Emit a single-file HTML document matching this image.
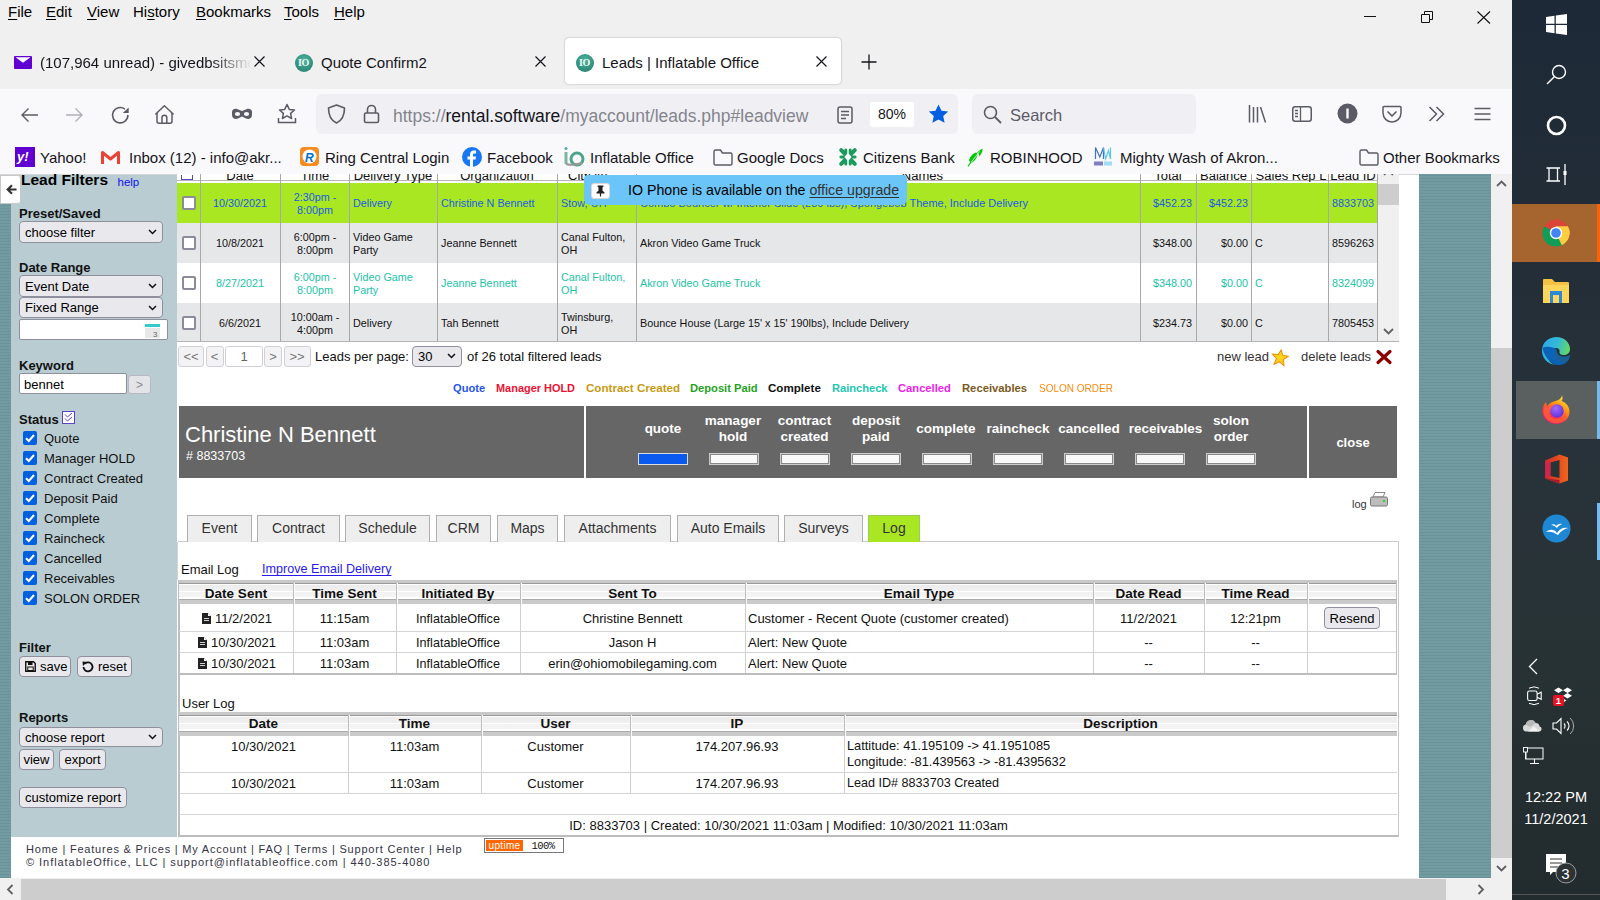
<!DOCTYPE html>
<html><head><meta charset="utf-8">
<style>
*{box-sizing:border-box;margin:0;padding:0}
html,body{width:1600px;height:900px;overflow:hidden;background:#fff;font-family:"Liberation Sans",sans-serif;}
.a{position:absolute;white-space:nowrap}
#chrome{position:absolute;left:0;top:0;width:1512px;height:174px;background:#f0f0f0}
#nav{position:absolute;left:0;top:89px;width:1512px;height:85px;background:#f9f9fb}
.menu{font-size:15px;color:#000;top:3px}
.menu u{text-decoration:underline;text-underline-offset:2px}
.tabt{font-size:15px;color:#15141a;top:54px}
.bm{font-size:15px;color:#15141a;margin-top:1px}
svg{position:absolute;overflow:visible}
#task{position:absolute;left:1512px;top:0;width:88px;height:900px;background:linear-gradient(#1d2937 0%,#222d37 25%,#28323a 50%,#283336 70%,#222b2d 100%)}
#page{position:absolute;left:0;top:174px;width:1491px;height:704px;background:#fff;overflow:hidden}
#vscroll{position:absolute;left:1491px;top:174px;width:21px;height:704px;background:#f0f0f0}
#hscroll{position:absolute;left:0;top:878px;width:1512px;height:22px;background:#f0f0f0}
</style></head><body>
<div id="chrome">
  <div class="a menu" style="left:8px"><u>F</u>ile</div>
  <div class="a menu" style="left:46px"><u>E</u>dit</div>
  <div class="a menu" style="left:87px"><u>V</u>iew</div>
  <div class="a menu" style="left:133px">Hi<u>s</u>tory</div>
  <div class="a menu" style="left:196px"><u>B</u>ookmarks</div>
  <div class="a menu" style="left:284px"><u>T</u>ools</div>
  <div class="a menu" style="left:334px"><u>H</u>elp</div>

  <!-- window controls -->
  <div class="a" style="left:1364px;top:16px;width:12px;height:1px;background:#111"></div>
  <svg style="left:1420px;top:10px" width="14" height="14" viewBox="0 0 14 14"><path d="M1.5 4.5h8v8h-8z M4.5 4.5V1.5h8v8h-3" fill="none" stroke="#111" stroke-width="1"/></svg>
  <svg style="left:1477px;top:10.5px" width="14" height="13" viewBox="0 0 14 13"><path d="M0.5 0.5L13 12.5M13 0.5L0.5 12.5" stroke="#111" stroke-width="1.1"/></svg>
  <!-- tabs -->
  <svg style="left:14px;top:55.5px" width="18" height="13" viewBox="0 0 18 13"><rect x="0" y="0" width="18" height="13" rx="1" fill="#6001d2"/><path d="M1.5 1.2L9 6.8L16.5 1.2Z" fill="#fff"/></svg>
  <div class="a tabt" style="left:40px;width:212px;overflow:hidden;-webkit-mask-image:linear-gradient(90deg,#000 80%,transparent)">(107,964 unread) - givedbsitsmc</div>
  <svg style="left:254px;top:56px" width="11" height="11" viewBox="0 0 11 11"><path d="M0.5 0.5L10.5 10.5M10.5 0.5L0.5 10.5" stroke="#15141a" stroke-width="1.2"/></svg>
  <div class="a" style="left:295px;top:54px;width:18px;height:18px;border-radius:50%;background:radial-gradient(circle at 50% 35%,#4fb3a0,#1f7a66)"></div>
  <div class="a" style="left:298px;top:57px;font:bold 10px 'Liberation Serif',serif;color:#eef8f4;letter-spacing:-0.3px">IO</div>
  <div class="a tabt" style="left:321px">Quote Confirm2</div>
  <svg style="left:535px;top:56px" width="11" height="11" viewBox="0 0 11 11"><path d="M0.5 0.5L10.5 10.5M10.5 0.5L0.5 10.5" stroke="#15141a" stroke-width="1.2"/></svg>
  <div class="a" style="left:565px;top:38px;width:276px;height:46px;background:#fff;border-radius:4px;box-shadow:0 0 2px rgba(0,0,0,.35)"></div>
  <div class="a" style="left:576px;top:54px;width:18px;height:18px;border-radius:50%;background:radial-gradient(circle at 50% 35%,#4fb3a0,#1f7a66)"></div>
  <div class="a" style="left:579px;top:57px;font:bold 10px 'Liberation Serif',serif;color:#eef8f4;letter-spacing:-0.3px">IO</div>
  <div class="a tabt" style="left:602px">Leads | Inflatable Office</div>
  <svg style="left:816px;top:56px" width="11" height="11" viewBox="0 0 11 11"><path d="M0.5 0.5L10.5 10.5M10.5 0.5L0.5 10.5" stroke="#15141a" stroke-width="1.2"/></svg>
  <svg style="left:861px;top:54px" width="16" height="16" viewBox="0 0 16 16"><path d="M8 0.5V15.5M0.5 8H15.5" stroke="#15141a" stroke-width="1.3"/></svg>
</div>
<div id="nav">
  <!-- nav icons (top relative 89) -->
  <svg style="left:20px;top:18px" width="19" height="16" viewBox="0 0 19 16"><path d="M18 8H2M8.5 1.5L2 8L8.5 14.5" fill="none" stroke="#5b5b66" stroke-width="1.4"/></svg>
  <svg style="left:65px;top:18px" width="19" height="16" viewBox="0 0 19 16"><path d="M1 8H17M10.5 1.5L17 8L10.5 14.5" fill="none" stroke="#b0b0b6" stroke-width="1.4"/></svg>
  <svg style="left:110px;top:16px" width="20" height="20" viewBox="0 0 20 20"><path d="M17.9 10A7.7 7.7 0 1 1 14.95 4.1" fill="none" stroke="#5b5b66" stroke-width="1.6"/><path d="M12.8 7.9L18.7 2.4V7.9Z" fill="#5b5b66"/></svg>
  <svg style="left:155px;top:16px" width="20" height="20" viewBox="0 0 20 20"><path d="M0.8 9L9.4 0.8L18.2 9" fill="none" stroke="#5b5b66" stroke-width="1.5" stroke-linejoin="round" stroke-linecap="round"/><path d="M2 8V16.2A2 2 0 0 0 4 18.2H15A2 2 0 0 0 17 16.2V8" fill="none" stroke="#5b5b66" stroke-width="1.5"/><path d="M7 18.2V12.6A2.4 2.4 0 0 1 11.8 12.6V18.2" fill="none" stroke="#5b5b66" stroke-width="1.5"/></svg>
  <svg style="left:231px;top:19px" width="22" height="12" viewBox="0 0 22 12"><path d="M1 4C1 1 4 0.5 6 1L11 3L16 1C18 0.5 21 1 21 4V7C21 11 17 11.5 15 10.5L11 8.5L7 10.5C5 11.5 1 11 1 7Z" fill="#5b5b66"/><ellipse cx="6.5" cy="6" rx="2.6" ry="2" fill="#f9f9fb"/><ellipse cx="15.5" cy="6" rx="2.6" ry="2" fill="#f9f9fb"/></svg>
  <svg style="left:277px;top:14px" width="20" height="21" viewBox="0 0 20 21"><path d="M10 1.5L12.3 6.4L17.5 7L13.6 10.4L14.6 15.5L10 12.9L5.4 15.5L6.4 10.4L2.5 7L7.7 6.4Z" fill="none" stroke="#5b5b66" stroke-width="1.5" stroke-linejoin="round"/><path d="M1.5 15V19.5H18.5V15" fill="none" stroke="#5b5b66" stroke-width="1.5"/></svg>
  <div class="a" style="left:316px;top:5px;width:642px;height:40px;background:#f0f0f4;border-radius:6px"></div>
  <svg style="left:327px;top:104px;top:15px" width="19" height="20" viewBox="0 0 19 20"><path d="M9.5 1L17.5 4C17.5 12 14 17 9.5 19C5 17 1.5 12 1.5 4Z" fill="none" stroke="#5b5b66" stroke-width="1.6" stroke-linejoin="round"/></svg>
  <svg style="left:363px;top:15px" width="17" height="20" viewBox="0 0 17 20"><rect x="1.5" y="9" width="14" height="9.5" rx="1.5" fill="none" stroke="#5b5b66" stroke-width="1.6"/><path d="M4.5 9V5.5A4 4 0 0 1 12.5 5.5V9" fill="none" stroke="#5b5b66" stroke-width="1.6"/></svg>
  <div class="a" style="left:393px;top:17px;font-size:17.5px;color:#84848c;letter-spacing:0px"><span>https://</span><span style="color:#15141a">rental.software</span><span>/myaccount/leads.php#leadview</span></div>
  <svg style="left:837px;top:17px" width="16" height="18" viewBox="0 0 16 18"><rect x="1" y="1" width="14" height="16" rx="2" fill="none" stroke="#5b5b66" stroke-width="1.5"/><path d="M4 5.5H12M4 9H12M4 12.5H9" stroke="#5b5b66" stroke-width="1.4"/></svg>
  <div class="a" style="left:870px;top:13px;width:44px;height:25px;background:#fff;border-radius:3px;font-size:14px;color:#15141a;text-align:center;line-height:25px">80%</div>
  <svg style="left:928px;top:15px" width="21" height="20" viewBox="0 0 21 20"><path d="M10.5 0.5L13.5 6.8L20.2 7.5L15.2 12L16.6 18.8L10.5 15.4L4.4 18.8L5.8 12L0.8 7.5L7.5 6.8Z" fill="#0061e0"/></svg>
  <div class="a" style="left:972px;top:5px;width:224px;height:40px;background:#f0f0f4;border-radius:6px"></div>
  <svg style="left:983px;top:16px" width="19" height="19" viewBox="0 0 19 19"><circle cx="7.5" cy="7.5" r="6" fill="none" stroke="#5b5b66" stroke-width="1.6"/><path d="M12 12L18 18" stroke="#5b5b66" stroke-width="1.8"/></svg>
  <div class="a" style="left:1010px;top:17px;font-size:16.5px;color:#5b5b66">Search</div>
  <svg style="left:1248px;top:15px" width="20" height="19" viewBox="0 0 20 19"><path d="M1.5 1V18.5M5.5 3V18.5M9.5 3V18.5M12.5 3L17.5 18.5" stroke="#5b5b66" stroke-width="1.5" fill="none"/></svg>
  <svg style="left:1292px;top:17px" width="20" height="16" viewBox="0 0 20 16"><rect x="0.75" y="0.75" width="18.5" height="14.5" rx="2.5" fill="none" stroke="#5b5b66" stroke-width="1.5"/><path d="M8.5 1V15M3 4.5H6M3 7.5H6M3 10.5H6" stroke="#5b5b66" stroke-width="1.3"/></svg>
  <svg style="left:1337px;top:14px" width="21" height="21" viewBox="0 0 21 21"><circle cx="10.5" cy="10.5" r="10" fill="#5b5b66"/><rect x="9.3" y="5.5" width="2.4" height="10" fill="#f9f9fb"/></svg>
  <svg style="left:1382px;top:16px" width="20" height="19" viewBox="0 0 20 19"><path d="M2 1.5H18A1 1 0 0 1 19 2.5V8A9 9 0 0 1 1 8V2.5A1 1 0 0 1 2 1.5Z" fill="none" stroke="#5b5b66" stroke-width="1.5"/><path d="M6 7L10 11L14 7" fill="none" stroke="#5b5b66" stroke-width="1.7" stroke-linecap="round" stroke-linejoin="round"/></svg>
  <svg style="left:1428px;top:16px" width="18" height="18" viewBox="0 0 18 18"><path d="M1.5 2L8.5 9L1.5 16M8.5 2L15.5 9L8.5 16" fill="none" stroke="#5b5b66" stroke-width="1.5"/></svg>
  <svg style="left:1474px;top:17.5px" width="17" height="14" viewBox="0 0 17 14"><path d="M0.5 1.5H16.5M0.5 7H16.5M0.5 12.5H16.5" stroke="#5b5b66" stroke-width="1.5"/></svg>
  <!-- bookmarks -->
  <div class="a" style="left:15px;top:58px;width:20px;height:20px;background:#6001d2"></div>
  <div class="a" style="left:17px;top:60px;font:bold 13px 'Liberation Sans';color:#fff;font-style:italic">y!</div>
  <svg style="left:101px;top:62px" width="19" height="14" viewBox="0 0 19 14"><path d="M1.5 13V1.5L9.5 8L17.5 1.5V13" fill="none" stroke="#ea4335" stroke-width="3" stroke-linejoin="round"/></svg>
  <svg style="left:300px;top:58px" width="19" height="19" viewBox="0 0 19 19"><rect x="0" y="0" width="19" height="19" rx="4" fill="#f68b1f"/><circle cx="9.5" cy="9.5" r="7" fill="#fff"/><text x="5" y="14.5" font-family="Liberation Sans" font-weight="bold" font-style="italic" font-size="12" fill="#0072c6">R</text></svg>
  <svg style="left:462px;top:58px" width="20" height="20" viewBox="0 0 20 20"><circle cx="10" cy="10" r="10" fill="#1877f2"/><path d="M11 20V12.5H13.5L14 9.5H11V7.8C11 7 11.3 6.4 12.5 6.4H14V3.8C13.5 3.7 12.7 3.6 11.8 3.6C9.6 3.6 8 4.9 8 7.4V9.5H5.5V12.5H8V20Z" fill="#fff"/></svg>
  <svg style="left:564px;top:58px" width="22" height="20" viewBox="0 0 22 20"><path d="M2 5V17" stroke="#7fb3a0" stroke-width="3"/><circle cx="2" cy="1.5" r="1.5" fill="#5aa"/><circle cx="13" cy="12" r="6" fill="none" stroke="#4aa58a" stroke-width="3"/><path d="M2 17Q8 19 18 16" stroke="#999" stroke-width="2" fill="none"/></svg>
  <svg style="left:713px;top:60px" width="20" height="17" viewBox="0 0 20 17"><path d="M1 2.5A1.5 1.5 0 0 1 2.5 1H7.5L9.5 4H17.5A1.5 1.5 0 0 1 19 5.5V14.5A1.5 1.5 0 0 1 17.5 16H2.5A1.5 1.5 0 0 1 1 14.5Z" fill="none" stroke="#5b5b66" stroke-width="1.4" stroke-linejoin="round"/></svg>
  <svg style="left:839px;top:59px" width="18" height="18" viewBox="0 0 18 18"><g stroke="#1a9a5c" stroke-width="4" stroke-linecap="round"><path d="M2.2 2.2L7 7M15.8 2.2L11 7M2.2 15.8L7 11M15.8 15.8L11 11"/><path d="M6.8 2V6M11.2 2V6M6.8 12V16M11.2 12V16" stroke-width="3"/><path d="M2 9H5M13 9H16" stroke-width="3.2"/></g><path d="M9 4.8L12.6 9L9 13.2L5.4 9Z" fill="#f9f9fb"/><path d="M9 0V18" stroke="#f9f9fb" stroke-width="0.6" opacity=".6"/></svg>
  <svg style="left:967px;top:58px" width="16" height="20" viewBox="0 0 16 20"><path d="M10 5.5C13 3 15 1.5 15.5 1.8C16 4 14 8 12 9.5C12.5 7.5 11.5 6.5 10 5.5Z" fill="#00c805"/><path d="M9.5 5.5C6 6 2.5 10 2 13.5L4 16C7 15 10 11 10.5 7.5Z" fill="#00c805"/><path d="M1 19.5L12.5 4.5" stroke="#f9f9fb" stroke-width="0.8"/><path d="M1 19.5L4 15" stroke="#00c805" stroke-width="1.2"/></svg>
  <svg style="left:1093px;top:57px" width="21" height="21" viewBox="0 0 21 21"><path d="M2.5 13V1.5L6.8 11L10.5 1.5V13" fill="none" stroke="#3f72c9" stroke-width="1.2"/><path d="M10.5 1.5L12.6 13L15.5 4.5L17.5 13V1.5" fill="none" stroke="#5ec8ea" stroke-width="1.2"/><rect x="1" y="15.5" width="9" height="4" fill="#6a6ac0" opacity=".85"/><rect x="11" y="15.5" width="8" height="4" fill="#8fd8ee" opacity=".85"/></svg>
  <svg style="left:1359px;top:60px" width="20" height="17" viewBox="0 0 20 17"><path d="M1 2.5A1.5 1.5 0 0 1 2.5 1H7.5L9.5 4H17.5A1.5 1.5 0 0 1 19 5.5V14.5A1.5 1.5 0 0 1 17.5 16H2.5A1.5 1.5 0 0 1 1 14.5Z" fill="none" stroke="#5b5b66" stroke-width="1.4" stroke-linejoin="round"/></svg>
  <div class="a bm" style="left:40px;top:59px">Yahoo!</div>
  <div class="a bm" style="left:129px;top:59px">Inbox (12) - info@akr...</div>
  <div class="a bm" style="left:325px;top:59px">Ring Central Login</div>
  <div class="a bm" style="left:487px;top:59px">Facebook</div>
  <div class="a bm" style="left:590px;top:59px">Inflatable Office</div>
  <div class="a bm" style="left:737px;top:59px">Google Docs</div>
  <div class="a bm" style="left:863px;top:59px">Citizens Bank</div>
  <div class="a bm" style="left:990px;top:59px">ROBINHOOD</div>
  <div class="a bm" style="left:1120px;top:59px">Mighty Wash of Akron...</div>
  <div class="a bm" style="left:1383px;top:59px">Other Bookmarks</div>
</div>
<div id="page"><div class="a" style="left:0px;top:0px;width:11px;height:704px;background:repeating-linear-gradient(180deg,#729aa1 0px,#729aa1 1px,#6a9299 1px,#6a9299 2px,#739ba2 2px,#739ba2 3px)"></div>
<div class="a" style="left:11px;top:0px;width:166px;height:663px;background:#b9ccd2"></div>
<div class="a" style="left:1419px;top:0px;width:72px;height:704px;background:repeating-linear-gradient(180deg,#729aa1 0px,#729aa1 1px,#6a9299 1px,#6a9299 2px,#739ba2 2px,#739ba2 3px)"></div>
<div class="a" style="left:0px;top:0px;width:1419px;height:1px;background:#d8d8d8"></div>
<div class="a" style="left:0px;top:1px;width:21px;height:29px;background:#fff;border:1px solid #c8c8c8;border-radius:0 3px 3px 0"></div>
<svg style="left:6px;top:10px" width="11" height="11" viewBox="0 0 11 11"><path d="M10.5 5.5H2M6 1.2L1.7 5.5L6 9.8" fill="none" stroke="#333" stroke-width="2.2"/></svg>
<div class="a" style="left:21px;top:-2.12px;font-size:15.5px;line-height:1;font-weight:bold;color:#000">Lead Filters</div>
<div class="a" style="left:117.5px;top:2.77px;font-size:11.5px;line-height:1;color:#1212e8">help</div>
<div class="a" style="left:19px;top:32.50px;font-size:13px;line-height:1;font-weight:bold;color:#111">Preset/Saved</div>
<div class="a" style="left:19px;top:47px;width:144px;height:22px;background:#e9e9ed;border:1px solid #8f8f9d;border-radius:4px"></div>
<div class="a" style="left:25px;top:51.60px;font-size:13px;line-height:1;color:#000">choose filter</div>
<svg style="left:148px;top:55.0px" width="9" height="6" viewBox="0 0 9 6"><path d="M1 1L4.5 4.5L8 1" fill="none" stroke="#111" stroke-width="1.5"/></svg>
<div class="a" style="left:19px;top:87.00px;font-size:13px;line-height:1;font-weight:bold;color:#111">Date Range</div>
<div class="a" style="left:19px;top:101px;width:144px;height:22px;background:#e9e9ed;border:1px solid #8f8f9d;border-radius:4px"></div>
<div class="a" style="left:25px;top:105.60px;font-size:13px;line-height:1;color:#000">Event Date</div>
<svg style="left:148px;top:109.0px" width="9" height="6" viewBox="0 0 9 6"><path d="M1 1L4.5 4.5L8 1" fill="none" stroke="#111" stroke-width="1.5"/></svg>
<div class="a" style="left:19px;top:123px;width:144px;height:21px;background:#e9e9ed;border:1px solid #8f8f9d;border-radius:4px"></div>
<div class="a" style="left:25px;top:127.10px;font-size:13px;line-height:1;color:#000">Fixed Range</div>
<svg style="left:148px;top:130.5px" width="9" height="6" viewBox="0 0 9 6"><path d="M1 1L4.5 4.5L8 1" fill="none" stroke="#111" stroke-width="1.5"/></svg>
<div class="a" style="left:19px;top:145px;width:149px;height:21px;background:#fff;border:1px solid #8f8f9d;border-radius:2px"></div>
<svg style="left:145px;top:150px" width="15" height="14" viewBox="0 0 15 14"><rect x="0" y="0" width="15" height="3" fill="#3cc"/><rect x="0" y="4" width="15" height="10" fill="#e8e8e8"/><text x="8" y="13" font-size="8" font-family="Liberation Sans" fill="#666">3</text></svg>
<div class="a" style="left:19px;top:185.00px;font-size:13px;line-height:1;font-weight:bold;color:#111">Keyword</div>
<div class="a" style="left:19px;top:199px;width:108px;height:21px;background:#fff;border:1px solid #8f8f9d;border-radius:2px"></div>
<div class="a" style="left:24px;top:203.50px;font-size:13px;line-height:1;color:#000">bennet</div>
<div class="a" style="left:128px;top:201px;width:23px;height:19px;background:#e3e4e8;border:1px solid #b8b8c4;border-radius:3px"></div>
<div class="a" style="left:-160.5px;width:600px;text-align:center;top:204.84px;font-size:12px;line-height:1;color:#888">&gt;</div>
<div class="a" style="left:19px;top:239.00px;font-size:13px;line-height:1;font-weight:bold;color:#111">Status</div>
<svg style="left:62px;top:237px" width="13" height="13" viewBox="0 0 13 13"><rect x="0.5" y="0.5" width="12" height="12" fill="#fff" stroke="#5544cc" stroke-width="1"/><path d="M3 3.5L5.5 6L10 2M3 7.5L5.5 10L10 6" fill="none" stroke="#5544cc" stroke-width="1"/></svg>
<svg style="left:23px;top:257px" width="14" height="14" viewBox="0 0 14 14"><rect x="0" y="0" width="14" height="14" rx="2" fill="#0060df"/><path d="M3 7.2L5.8 10L11 4" fill="none" stroke="#fff" stroke-width="2"/></svg>
<div class="a" style="left:44px;top:258.00px;font-size:13px;line-height:1;color:#111">Quote</div>
<svg style="left:23px;top:277px" width="14" height="14" viewBox="0 0 14 14"><rect x="0" y="0" width="14" height="14" rx="2" fill="#0060df"/><path d="M3 7.2L5.8 10L11 4" fill="none" stroke="#fff" stroke-width="2"/></svg>
<div class="a" style="left:44px;top:278.00px;font-size:13px;line-height:1;color:#111">Manager HOLD</div>
<svg style="left:23px;top:297px" width="14" height="14" viewBox="0 0 14 14"><rect x="0" y="0" width="14" height="14" rx="2" fill="#0060df"/><path d="M3 7.2L5.8 10L11 4" fill="none" stroke="#fff" stroke-width="2"/></svg>
<div class="a" style="left:44px;top:298.00px;font-size:13px;line-height:1;color:#111">Contract Created</div>
<svg style="left:23px;top:317px" width="14" height="14" viewBox="0 0 14 14"><rect x="0" y="0" width="14" height="14" rx="2" fill="#0060df"/><path d="M3 7.2L5.8 10L11 4" fill="none" stroke="#fff" stroke-width="2"/></svg>
<div class="a" style="left:44px;top:318.00px;font-size:13px;line-height:1;color:#111">Deposit Paid</div>
<svg style="left:23px;top:337px" width="14" height="14" viewBox="0 0 14 14"><rect x="0" y="0" width="14" height="14" rx="2" fill="#0060df"/><path d="M3 7.2L5.8 10L11 4" fill="none" stroke="#fff" stroke-width="2"/></svg>
<div class="a" style="left:44px;top:338.00px;font-size:13px;line-height:1;color:#111">Complete</div>
<svg style="left:23px;top:357px" width="14" height="14" viewBox="0 0 14 14"><rect x="0" y="0" width="14" height="14" rx="2" fill="#0060df"/><path d="M3 7.2L5.8 10L11 4" fill="none" stroke="#fff" stroke-width="2"/></svg>
<div class="a" style="left:44px;top:358.00px;font-size:13px;line-height:1;color:#111">Raincheck</div>
<svg style="left:23px;top:377px" width="14" height="14" viewBox="0 0 14 14"><rect x="0" y="0" width="14" height="14" rx="2" fill="#0060df"/><path d="M3 7.2L5.8 10L11 4" fill="none" stroke="#fff" stroke-width="2"/></svg>
<div class="a" style="left:44px;top:378.00px;font-size:13px;line-height:1;color:#111">Cancelled</div>
<svg style="left:23px;top:397px" width="14" height="14" viewBox="0 0 14 14"><rect x="0" y="0" width="14" height="14" rx="2" fill="#0060df"/><path d="M3 7.2L5.8 10L11 4" fill="none" stroke="#fff" stroke-width="2"/></svg>
<div class="a" style="left:44px;top:398.00px;font-size:13px;line-height:1;color:#111">Receivables</div>
<svg style="left:23px;top:417px" width="14" height="14" viewBox="0 0 14 14"><rect x="0" y="0" width="14" height="14" rx="2" fill="#0060df"/><path d="M3 7.2L5.8 10L11 4" fill="none" stroke="#fff" stroke-width="2"/></svg>
<div class="a" style="left:44px;top:418.00px;font-size:13px;line-height:1;color:#111">SOLON ORDER</div>
<div class="a" style="left:19px;top:466.50px;font-size:13px;line-height:1;font-weight:bold;color:#111">Filter</div>
<div class="a" style="left:19px;top:482px;width:52px;height:21px;background:#e9e9ed;border:1px solid #8f8f9d;border-radius:4px"></div>
<svg style="left:25px;top:487px" width="11" height="11" viewBox="0 0 11 11"><path d="M0.75 0.75H8.5L10.25 2.5V10.25H0.75Z" fill="none" stroke="#111" stroke-width="1.4"/><rect x="3" y="1" width="4.5" height="3" fill="#111"/><rect x="2.8" y="6" width="5.4" height="3.5" fill="none" stroke="#111" stroke-width="1"/></svg>
<div class="a" style="left:40px;top:486.00px;font-size:13px;line-height:1;color:#000">save</div>
<div class="a" style="left:77px;top:482px;width:55px;height:21px;background:#e9e9ed;border:1px solid #8f8f9d;border-radius:4px"></div>
<svg style="left:82px;top:487px" width="12" height="12" viewBox="0 0 12 12"><path d="M3 2.5A4.5 4.5 0 1 1 1.5 6" fill="none" stroke="#111" stroke-width="1.8"/><path d="M0.5 0.5L5 1L1 5Z" fill="#111"/></svg>
<div class="a" style="left:98px;top:486.00px;font-size:13px;line-height:1;color:#000">reset</div>
<div class="a" style="left:19px;top:537.00px;font-size:13px;line-height:1;font-weight:bold;color:#111">Reports</div>
<div class="a" style="left:19px;top:553px;width:144px;height:20px;background:#e9e9ed;border:1px solid #8f8f9d;border-radius:4px"></div>
<div class="a" style="left:25px;top:556.60px;font-size:13px;line-height:1;color:#000">choose report</div>
<svg style="left:148px;top:560.0px" width="9" height="6" viewBox="0 0 9 6"><path d="M1 1L4.5 4.5L8 1" fill="none" stroke="#111" stroke-width="1.5"/></svg>
<div class="a" style="left:19px;top:575px;width:35px;height:21px;background:#e9e9ed;border:1px solid #8f8f9d;border-radius:4px"></div>
<div class="a" style="left:-263.5px;width:600px;text-align:center;top:579.10px;font-size:13px;line-height:1;color:#000">view</div>
<div class="a" style="left:59px;top:575px;width:47px;height:21px;background:#e9e9ed;border:1px solid #8f8f9d;border-radius:4px"></div>
<div class="a" style="left:-217.5px;width:600px;text-align:center;top:579.10px;font-size:13px;line-height:1;color:#000">export</div>
<div class="a" style="left:19px;top:613px;width:108px;height:21px;background:#e9e9ed;border:1px solid #8f8f9d;border-radius:4px"></div>
<div class="a" style="left:-227.0px;width:600px;text-align:center;top:617.10px;font-size:13px;line-height:1;color:#000">customize report</div>
<div class="a" style="left:177px;top:0px;width:1201px;height:7px;background:#fff"></div>
<div class="a" style="left:177px;top:6px;width:1201px;height:1px;background:#b4b4b4"></div>
<div class="a" style="left:177px;top:9px;width:1201px;height:40px;background:#a9e723"></div>
<div class="a" style="left:177px;top:49px;width:1201px;height:40px;background:#e6e7e9"></div>
<div class="a" style="left:177px;top:89px;width:1201px;height:40px;background:#ffffff"></div>
<div class="a" style="left:177px;top:129px;width:1201px;height:38px;background:#e6e7e9"></div>
<div class="a" style="left:177px;top:167px;width:1222px;height:1px;background:#b4b4b4"></div>
<div class="a" style="left:200px;top:0px;width:1px;height:167px;background:#a8a8a8"></div>
<div class="a" style="left:280px;top:0px;width:1px;height:167px;background:#a8a8a8"></div>
<div class="a" style="left:349px;top:0px;width:1px;height:167px;background:#a8a8a8"></div>
<div class="a" style="left:437px;top:0px;width:1px;height:167px;background:#a8a8a8"></div>
<div class="a" style="left:557px;top:0px;width:1px;height:167px;background:#a8a8a8"></div>
<div class="a" style="left:636px;top:0px;width:1px;height:167px;background:#a8a8a8"></div>
<div class="a" style="left:1140px;top:0px;width:1px;height:167px;background:#a8a8a8"></div>
<div class="a" style="left:1196px;top:0px;width:1px;height:167px;background:#a8a8a8"></div>
<div class="a" style="left:1251px;top:0px;width:1px;height:167px;background:#a8a8a8"></div>
<div class="a" style="left:1328px;top:0px;width:1px;height:167px;background:#a8a8a8"></div>
<div class="a" style="left:1377px;top:0px;width:1px;height:167px;background:#a8a8a8"></div>
<div class="a" style="left:-60px;width:600px;text-align:center;top:-5.00px;font-size:13px;line-height:1;color:#111">Date</div>
<div class="a" style="left:15px;width:600px;text-align:center;top:-5.00px;font-size:13px;line-height:1;color:#111">Time</div>
<div class="a" style="left:93px;width:600px;text-align:center;top:-5.00px;font-size:13px;line-height:1;color:#111">Delivery Type</div>
<div class="a" style="left:197px;width:600px;text-align:center;top:-5.00px;font-size:13px;line-height:1;color:#111">Organization</div>
<div class="a" style="left:296px;width:600px;text-align:center;top:-5.00px;font-size:13px;line-height:1;color:#111">City</div>
<div class="a" style="left:868px;width:600px;text-align:center;top:-5.00px;font-size:13px;line-height:1;color:#111">Total</div>
<div class="a" style="left:923.5px;width:600px;text-align:center;top:-5.00px;font-size:13px;line-height:1;color:#111">Balance</div>
<div class="a" style="left:1053px;width:600px;text-align:center;top:-5.00px;font-size:13px;line-height:1;color:#111">Lead ID</div>
<div class="a" style="left:343px;width:600px;text-align:right;top:-5.00px;font-size:13px;line-height:1;color:#111">Names</div>
<div class="a" style="left:568px;top:-5.00px;font-size:13px;line-height:1;color:#111">City</div>
<div class="a" style="left:1252px;top:-5.00px;width:75px;overflow:hidden;font-size:13px;line-height:1;color:#111">&nbsp;Sales Rep Lead</div>
<div class="a" style="left:181px;top:1px;width:12px;height:5px;border:1px solid #5544cc;border-top:none;background:#fff"></div>
<div class="a" style="left:182px;top:22px;width:14px;height:14px;border:2px solid #8b8b99;border-radius:2px;background:#fff"></div>
<div class="a" style="left:-60px;width:600px;text-align:center;top:24.36px;font-size:10.8px;line-height:1;color:#1a5ae6">10/30/2021</div>
<div class="a" style="left:15px;width:600px;text-align:center;top:17.86px;font-size:10.8px;line-height:1;color:#1a5ae6">2:30pm -</div>
<div class="a" style="left:15px;width:600px;text-align:center;top:30.86px;font-size:10.8px;line-height:1;color:#1a5ae6">8:00pm</div>
<div class="a" style="left:353px;top:24.36px;font-size:10.8px;line-height:1;color:#1a5ae6">Delivery</div>
<div class="a" style="left:441px;top:24.36px;font-size:10.8px;line-height:1;color:#1a5ae6">Christine N Bennett</div>
<div class="a" style="left:561px;top:24.36px;font-size:10.8px;line-height:1;color:#1a5ae6">Stow, OH</div>
<div class="a" style="left:640px;top:24.19px;font-size:11.0px;line-height:1;color:#1a5ae6">Combo Bouncer w/ Interior Slide (280 lbs), Spongebob Theme, Include Delivery</div>
<div class="a" style="left:592px;width:600px;text-align:right;top:24.36px;font-size:10.8px;line-height:1;color:#1a5ae6">$452.23</div>
<div class="a" style="left:648px;width:600px;text-align:right;top:24.36px;font-size:10.8px;line-height:1;color:#1a5ae6">$452.23</div>
<div class="a" style="left:774px;width:600px;text-align:right;top:24.36px;font-size:10.8px;line-height:1;color:#1a5ae6">8833703</div>
<div class="a" style="left:182px;top:62px;width:14px;height:14px;border:2px solid #8b8b99;border-radius:2px;background:#fff"></div>
<div class="a" style="left:-60px;width:600px;text-align:center;top:64.36px;font-size:10.8px;line-height:1;color:#111">10/8/2021</div>
<div class="a" style="left:15px;width:600px;text-align:center;top:57.86px;font-size:10.8px;line-height:1;color:#111">6:00pm -</div>
<div class="a" style="left:15px;width:600px;text-align:center;top:70.86px;font-size:10.8px;line-height:1;color:#111">8:00pm</div>
<div class="a" style="left:353px;top:57.86px;font-size:10.8px;line-height:1;color:#111">Video Game</div>
<div class="a" style="left:353px;top:70.86px;font-size:10.8px;line-height:1;color:#111">Party</div>
<div class="a" style="left:441px;top:64.36px;font-size:10.8px;line-height:1;color:#111">Jeanne Bennett</div>
<div class="a" style="left:561px;top:57.86px;font-size:10.8px;line-height:1;color:#111">Canal Fulton,</div>
<div class="a" style="left:561px;top:70.86px;font-size:10.8px;line-height:1;color:#111">OH</div>
<div class="a" style="left:640px;top:64.36px;font-size:10.8px;line-height:1;color:#111">Akron Video Game Truck</div>
<div class="a" style="left:592px;width:600px;text-align:right;top:64.36px;font-size:10.8px;line-height:1;color:#111">$348.00</div>
<div class="a" style="left:648px;width:600px;text-align:right;top:64.36px;font-size:10.8px;line-height:1;color:#111">$0.00</div>
<div class="a" style="left:1255px;top:64.36px;font-size:10.8px;line-height:1;color:#111">C</div>
<div class="a" style="left:774px;width:600px;text-align:right;top:64.36px;font-size:10.8px;line-height:1;color:#111">8596263</div>
<div class="a" style="left:182px;top:102px;width:14px;height:14px;border:2px solid #8b8b99;border-radius:2px;background:#fff"></div>
<div class="a" style="left:-60px;width:600px;text-align:center;top:104.36px;font-size:10.8px;line-height:1;color:#22c2a8">8/27/2021</div>
<div class="a" style="left:15px;width:600px;text-align:center;top:97.86px;font-size:10.8px;line-height:1;color:#22c2a8">6:00pm -</div>
<div class="a" style="left:15px;width:600px;text-align:center;top:110.86px;font-size:10.8px;line-height:1;color:#22c2a8">8:00pm</div>
<div class="a" style="left:353px;top:97.86px;font-size:10.8px;line-height:1;color:#22c2a8">Video Game</div>
<div class="a" style="left:353px;top:110.86px;font-size:10.8px;line-height:1;color:#22c2a8">Party</div>
<div class="a" style="left:441px;top:104.36px;font-size:10.8px;line-height:1;color:#22c2a8">Jeanne Bennett</div>
<div class="a" style="left:561px;top:97.86px;font-size:10.8px;line-height:1;color:#22c2a8">Canal Fulton,</div>
<div class="a" style="left:561px;top:110.86px;font-size:10.8px;line-height:1;color:#22c2a8">OH</div>
<div class="a" style="left:640px;top:104.36px;font-size:10.8px;line-height:1;color:#22c2a8">Akron Video Game Truck</div>
<div class="a" style="left:592px;width:600px;text-align:right;top:104.36px;font-size:10.8px;line-height:1;color:#22c2a8">$348.00</div>
<div class="a" style="left:648px;width:600px;text-align:right;top:104.36px;font-size:10.8px;line-height:1;color:#22c2a8">$0.00</div>
<div class="a" style="left:1255px;top:104.36px;font-size:10.8px;line-height:1;color:#22c2a8">C</div>
<div class="a" style="left:774px;width:600px;text-align:right;top:104.36px;font-size:10.8px;line-height:1;color:#22c2a8">8324099</div>
<div class="a" style="left:182px;top:142px;width:14px;height:14px;border:2px solid #8b8b99;border-radius:2px;background:#fff"></div>
<div class="a" style="left:-60px;width:600px;text-align:center;top:144.36px;font-size:10.8px;line-height:1;color:#111">6/6/2021</div>
<div class="a" style="left:15px;width:600px;text-align:center;top:137.86px;font-size:10.8px;line-height:1;color:#111">10:00am -</div>
<div class="a" style="left:15px;width:600px;text-align:center;top:150.86px;font-size:10.8px;line-height:1;color:#111">4:00pm</div>
<div class="a" style="left:353px;top:144.36px;font-size:10.8px;line-height:1;color:#111">Delivery</div>
<div class="a" style="left:441px;top:144.36px;font-size:10.8px;line-height:1;color:#111">Tah Bennett</div>
<div class="a" style="left:561px;top:137.86px;font-size:10.8px;line-height:1;color:#111">Twinsburg,</div>
<div class="a" style="left:561px;top:150.86px;font-size:10.8px;line-height:1;color:#111">OH</div>
<div class="a" style="left:640px;top:144.36px;font-size:10.8px;line-height:1;color:#111">Bounce House (Large 15&#x27; x 15&#x27; 190lbs), Include Delivery</div>
<div class="a" style="left:592px;width:600px;text-align:right;top:144.36px;font-size:10.8px;line-height:1;color:#111">$234.73</div>
<div class="a" style="left:648px;width:600px;text-align:right;top:144.36px;font-size:10.8px;line-height:1;color:#111">$0.00</div>
<div class="a" style="left:1255px;top:144.36px;font-size:10.8px;line-height:1;color:#111">C</div>
<div class="a" style="left:774px;width:600px;text-align:right;top:144.36px;font-size:10.8px;line-height:1;color:#111">7805453</div>
<div class="a" style="left:1378px;top:0px;width:21px;height:167px;background:#f0f0f0"></div>
<div class="a" style="left:1378px;top:10px;width:21px;height:21px;background:#cdcdcd"></div>
<svg style="left:1383px;top:-4px" width="11" height="6" viewBox="0 0 11 6"><path d="M1 5L5.5 1L10 5" fill="none" stroke="#606060" stroke-width="1.6"/></svg>
<svg style="left:1383px;top:154px" width="11" height="7" viewBox="0 0 11 7"><path d="M1 1L5.5 5.5L10 1" fill="none" stroke="#606060" stroke-width="1.8"/></svg>
<div class="a" style="left:584px;top:1px;width:323px;height:30px;background:#6bc5f8;border-radius:4px 4px 6px 6px"></div>
<div class="a" style="left:591px;top:9px;width:19px;height:16px;background:#fff;border:1px solid #e0d8d0;border-radius:3px"></div>
<svg style="left:596px;top:11px" width="9" height="12" viewBox="0 0 9 12"><path d="M1.5 0.5H7.5V1.5L6.5 2.5V5.5L8.5 7.5V8.5H0.5V7.5L2.5 5.5V2.5L1.5 1.5Z" fill="#222"/><path d="M4.5 8V11.5" stroke="#222" stroke-width="1.2"/></svg>
<div class="a" style="left:628px;top:8.98px;font-size:14.2px;line-height:1;color:#000">IO Phone is available on the <span style="color:#333;text-decoration:underline;text-underline-offset:1.5px">office upgrade</span></div>
<div class="a" style="left:178px;top:172px;width:26px;height:21px;background:#f3f3f5;border:1px solid #d0d0d6;border-radius:3px"></div>
<div class="a" style="left:-109.0px;width:600px;text-align:center;top:176.00px;font-size:13px;line-height:1;color:#777">&lt;&lt;</div>
<div class="a" style="left:205.5px;top:172px;width:18px;height:21px;background:#f3f3f5;border:1px solid #d0d0d6;border-radius:3px"></div>
<div class="a" style="left:-85.5px;width:600px;text-align:center;top:176.00px;font-size:13px;line-height:1;color:#777">&lt;</div>
<div class="a" style="left:225px;top:172px;width:38px;height:21px;background:#fff;border:1px solid #d0d0d6;border-radius:3px"></div>
<div class="a" style="left:-56.0px;width:600px;text-align:center;top:176.00px;font-size:13px;line-height:1;color:#666">1</div>
<div class="a" style="left:264px;top:172px;width:18px;height:21px;background:#f3f3f5;border:1px solid #d0d0d6;border-radius:3px"></div>
<div class="a" style="left:-27.0px;width:600px;text-align:center;top:176.00px;font-size:13px;line-height:1;color:#777">&gt;</div>
<div class="a" style="left:283.5px;top:172px;width:27px;height:21px;background:#f3f3f5;border:1px solid #d0d0d6;border-radius:3px"></div>
<div class="a" style="left:-3.0px;width:600px;text-align:center;top:176.00px;font-size:13px;line-height:1;color:#777">&gt;&gt;</div>
<div class="a" style="left:315px;top:175.50px;font-size:13px;line-height:1;color:#111">Leads per page:</div>
<div class="a" style="left:412px;top:171.5px;width:50px;height:21px;background:#e9e9ed;border:1px solid #8f8f9d;border-radius:4px"></div>
<div class="a" style="left:418px;top:175.60px;font-size:13px;line-height:1;color:#000">30</div>
<svg style="left:447px;top:179.0px" width="9" height="6" viewBox="0 0 9 6"><path d="M1 1L4.5 4.5L8 1" fill="none" stroke="#111" stroke-width="1.5"/></svg>
<div class="a" style="left:467px;top:175.50px;font-size:13px;line-height:1;color:#111">of 26 total filtered leads</div>
<div class="a" style="left:1217px;top:175.50px;font-size:13px;line-height:1;color:#333">new lead</div>
<svg style="left:1271px;top:175px" width="18" height="17" viewBox="0 0 18 17"><path d="M9 0.8L11.2 5.8L17 6.2L12.5 10L14 16L9 12.8L4 16L5.5 10L1 6.2L6.8 5.8Z" fill="#ffd21e" stroke="#f08a00" stroke-width="1" transform="rotate(8 9 9)"/></svg>
<div class="a" style="left:1301px;top:175.50px;font-size:13px;line-height:1;color:#333">delete leads</div>
<svg style="left:1376px;top:176px" width="16" height="14" viewBox="0 0 16 14"><path d="M2 1.5L14 12.5M14 1.5L2 12.5" stroke="#8a0000" stroke-width="3.2" stroke-linecap="round"/></svg>
<div class="a" style="left:453px;top:208.90px;font-size:11.1px;line-height:1;font-weight:bold;color:#1f55ee">Quote</div>
<div class="a" style="left:496px;top:209.04px;font-size:10.94px;line-height:1;font-weight:bold;color:#ee1133">Manager HOLD</div>
<div class="a" style="left:586px;top:208.48px;font-size:11.6px;line-height:1;font-weight:bold;color:#c89a10">Contract Created</div>
<div class="a" style="left:690px;top:208.84px;font-size:11.17px;line-height:1;font-weight:bold;color:#1fa31f">Deposit Paid</div>
<div class="a" style="left:768px;top:208.48px;font-size:11.6px;line-height:1;font-weight:bold;color:#111">Complete</div>
<div class="a" style="left:832px;top:208.90px;font-size:11.1px;line-height:1;font-weight:bold;color:#22c6b2">Raincheck</div>
<div class="a" style="left:898px;top:208.82px;font-size:11.2px;line-height:1;font-weight:bold;color:#ee22ee">Cancelled</div>
<div class="a" style="left:962px;top:208.78px;font-size:11.25px;line-height:1;font-weight:bold;color:#7a5a20">Receivables</div>
<div class="a" style="left:1039px;top:208.57px;font-size:11.5px;line-height:1;font-weight:normal;transform:scaleX(0.87);transform-origin:0 0;color:#f98a14">SOLON ORDER</div>
<div class="a" style="left:179px;top:232px;width:405px;height:72px;background:#666"></div>
<div class="a" style="left:586px;top:232px;width:721px;height:72px;background:#666"></div>
<div class="a" style="left:1309px;top:232px;width:88px;height:72px;background:#666"></div>
<div class="a" style="left:185px;top:249.88px;font-size:22px;line-height:1;color:#fff">Christine N Bennett</div>
<div class="a" style="left:186px;top:275.92px;font-size:12.5px;line-height:1;color:#fff"># 8833703</div>
<div class="a" style="left:363px;width:600px;text-align:center;top:247.57px;font-size:13.5px;line-height:1;font-weight:bold;color:#fff">quote</div>
<div class="a" style="left:638px;top:279px;width:50px;height:12px;background:#0a5af0;border:1px solid #ddd"></div>
<div class="a" style="left:433px;width:600px;text-align:center;top:239.87px;font-size:13.5px;line-height:1;font-weight:bold;color:#fff">manager</div>
<div class="a" style="left:433px;width:600px;text-align:center;top:255.57px;font-size:13.5px;line-height:1;font-weight:bold;color:#fff">hold</div>
<div class="a" style="left:709px;top:279px;width:50px;height:12px;background:#f8f8f8;border:1px solid #ccc;box-shadow:inset 0 0 0 1px #888"></div>
<div class="a" style="left:504.5px;width:600px;text-align:center;top:239.87px;font-size:13.5px;line-height:1;font-weight:bold;color:#fff">contract</div>
<div class="a" style="left:504.5px;width:600px;text-align:center;top:255.57px;font-size:13.5px;line-height:1;font-weight:bold;color:#fff">created</div>
<div class="a" style="left:780px;top:279px;width:50px;height:12px;background:#f8f8f8;border:1px solid #ccc;box-shadow:inset 0 0 0 1px #888"></div>
<div class="a" style="left:576px;width:600px;text-align:center;top:239.87px;font-size:13.5px;line-height:1;font-weight:bold;color:#fff">deposit</div>
<div class="a" style="left:576px;width:600px;text-align:center;top:255.57px;font-size:13.5px;line-height:1;font-weight:bold;color:#fff">paid</div>
<div class="a" style="left:851px;top:279px;width:50px;height:12px;background:#f8f8f8;border:1px solid #ccc;box-shadow:inset 0 0 0 1px #888"></div>
<div class="a" style="left:646px;width:600px;text-align:center;top:247.57px;font-size:13.5px;line-height:1;font-weight:bold;color:#fff">complete</div>
<div class="a" style="left:922px;top:279px;width:50px;height:12px;background:#f8f8f8;border:1px solid #ccc;box-shadow:inset 0 0 0 1px #888"></div>
<div class="a" style="left:718px;width:600px;text-align:center;top:247.57px;font-size:13.5px;line-height:1;font-weight:bold;color:#fff">raincheck</div>
<div class="a" style="left:993px;top:279px;width:50px;height:12px;background:#f8f8f8;border:1px solid #ccc;box-shadow:inset 0 0 0 1px #888"></div>
<div class="a" style="left:789px;width:600px;text-align:center;top:247.57px;font-size:13.5px;line-height:1;font-weight:bold;color:#fff">cancelled</div>
<div class="a" style="left:1064px;top:279px;width:50px;height:12px;background:#f8f8f8;border:1px solid #ccc;box-shadow:inset 0 0 0 1px #888"></div>
<div class="a" style="left:865.5px;width:600px;text-align:center;top:247.57px;font-size:13.5px;line-height:1;font-weight:bold;color:#fff">receivables</div>
<div class="a" style="left:1135px;top:279px;width:50px;height:12px;background:#f8f8f8;border:1px solid #ccc;box-shadow:inset 0 0 0 1px #888"></div>
<div class="a" style="left:931px;width:600px;text-align:center;top:239.87px;font-size:13.5px;line-height:1;font-weight:bold;color:#fff">solon</div>
<div class="a" style="left:931px;width:600px;text-align:center;top:255.57px;font-size:13.5px;line-height:1;font-weight:bold;color:#fff">order</div>
<div class="a" style="left:1206px;top:279px;width:50px;height:12px;background:#f8f8f8;border:1px solid #ccc;box-shadow:inset 0 0 0 1px #888"></div>
<div class="a" style="left:1053px;width:600px;text-align:center;top:262.00px;font-size:13px;line-height:1;font-weight:bold;color:#fff">close</div>
<div class="a" style="left:1352px;top:324.69px;font-size:11px;line-height:1;color:#333">log</div>
<svg style="left:1370px;top:318px" width="18" height="15" viewBox="0 0 18 15"><path d="M5 0.5H15L13 5H3Z" fill="#fff" stroke="#888" stroke-width="1"/><rect x="0.5" y="5" width="17" height="9" rx="1.5" fill="#bdbdbd" stroke="#777" stroke-width="1"/><rect x="13" y="8" width="2" height="2" fill="#2d2"/></svg>
<div class="a" style="left:178px;top:367px;width:1221px;height:1px;background:#c8c8c8"></div>
<div class="a" style="left:187px;top:341px;width:65px;height:27px;background:#eeeeee;border:1px solid #b0b0b0;border-bottom:none"></div>
<div class="a" style="left:-80.5px;width:600px;text-align:center;top:347.15px;font-size:14px;line-height:1;color:#333">Event</div>
<div class="a" style="left:257px;top:341px;width:83px;height:27px;background:#eeeeee;border:1px solid #b0b0b0;border-bottom:none"></div>
<div class="a" style="left:-1.5px;width:600px;text-align:center;top:347.15px;font-size:14px;line-height:1;color:#333">Contract</div>
<div class="a" style="left:345px;top:341px;width:85px;height:27px;background:#eeeeee;border:1px solid #b0b0b0;border-bottom:none"></div>
<div class="a" style="left:87.5px;width:600px;text-align:center;top:347.15px;font-size:14px;line-height:1;color:#333">Schedule</div>
<div class="a" style="left:436px;top:341px;width:55px;height:27px;background:#eeeeee;border:1px solid #b0b0b0;border-bottom:none"></div>
<div class="a" style="left:163.5px;width:600px;text-align:center;top:347.15px;font-size:14px;line-height:1;color:#333">CRM</div>
<div class="a" style="left:497px;top:341px;width:61px;height:27px;background:#eeeeee;border:1px solid #b0b0b0;border-bottom:none"></div>
<div class="a" style="left:227.5px;width:600px;text-align:center;top:347.15px;font-size:14px;line-height:1;color:#333">Maps</div>
<div class="a" style="left:564px;top:341px;width:107px;height:27px;background:#eeeeee;border:1px solid #b0b0b0;border-bottom:none"></div>
<div class="a" style="left:317.5px;width:600px;text-align:center;top:347.15px;font-size:14px;line-height:1;color:#333">Attachments</div>
<div class="a" style="left:677px;top:341px;width:102px;height:27px;background:#eeeeee;border:1px solid #b0b0b0;border-bottom:none"></div>
<div class="a" style="left:428.0px;width:600px;text-align:center;top:347.15px;font-size:14px;line-height:1;color:#333">Auto Emails</div>
<div class="a" style="left:784px;top:341px;width:79px;height:27px;background:#eeeeee;border:1px solid #b0b0b0;border-bottom:none"></div>
<div class="a" style="left:523.5px;width:600px;text-align:center;top:347.15px;font-size:14px;line-height:1;color:#333">Surveys</div>
<div class="a" style="left:868px;top:341px;width:52px;height:27px;background:#a9e723;border:1px solid #9ccc55;border-bottom:none"></div>
<div class="a" style="left:594.0px;width:600px;text-align:center;top:347.15px;font-size:14px;line-height:1;color:#333">Log</div>
<div class="a" style="left:177px;top:368px;width:1px;height:38px;background:#d4d4d4"></div>
<div class="a" style="left:178px;top:406px;width:2px;height:257px;background:#bdbdbd"></div>
<div class="a" style="left:1398px;top:368px;width:1px;height:295px;background:#c8c8c8"></div>
<div class="a" style="left:178px;top:661px;width:1220px;height:2px;background:#bdbdbd"></div>
<div class="a" style="left:181px;top:389.00px;font-size:13px;line-height:1;color:#111">Email Log</div>
<div class="a" style="left:262px;top:389.33px;font-size:12.6px;line-height:1;color:#2a1aee;text-decoration:underline;text-underline-offset:1.5px">Improve Email Delivery</div>
<div class="a" style="left:179px;top:406px;width:1218px;height:3px;background:#c8c8c8"></div>
<div class="a" style="left:179px;top:409px;width:1218px;height:1px;background:#999"></div>
<div class="a" style="left:179px;top:410px;width:1218px;height:20px;background:linear-gradient(180deg,#fff 0,#fff 1px,#ececec 1px,#f0f0f0 7px,#fff 7px,#fff 8px,#f2f2f2 8px,#f4f4f4 13px,#fff 13px,#fff 15px,#aaa 15px,#aaa 16px,#cacaca 16px)"></div>
<div class="a" style="left:293px;top:409px;width:1px;height:21px;background:#bdbdbd"></div>
<div class="a" style="left:294px;top:409px;width:1px;height:21px;background:#fafafa"></div>
<div class="a" style="left:396px;top:409px;width:1px;height:21px;background:#bdbdbd"></div>
<div class="a" style="left:397px;top:409px;width:1px;height:21px;background:#fafafa"></div>
<div class="a" style="left:520px;top:409px;width:1px;height:21px;background:#bdbdbd"></div>
<div class="a" style="left:521px;top:409px;width:1px;height:21px;background:#fafafa"></div>
<div class="a" style="left:745px;top:409px;width:1px;height:21px;background:#bdbdbd"></div>
<div class="a" style="left:746px;top:409px;width:1px;height:21px;background:#fafafa"></div>
<div class="a" style="left:1093px;top:409px;width:1px;height:21px;background:#bdbdbd"></div>
<div class="a" style="left:1094px;top:409px;width:1px;height:21px;background:#fafafa"></div>
<div class="a" style="left:1204px;top:409px;width:1px;height:21px;background:#bdbdbd"></div>
<div class="a" style="left:1205px;top:409px;width:1px;height:21px;background:#fafafa"></div>
<div class="a" style="left:1307px;top:409px;width:1px;height:21px;background:#bdbdbd"></div>
<div class="a" style="left:1308px;top:409px;width:1px;height:21px;background:#fafafa"></div>
<div class="a" style="left:179px;top:457px;width:1218px;height:1px;background:#d4d4d4"></div>
<div class="a" style="left:179px;top:478px;width:1218px;height:1px;background:#d4d4d4"></div>
<div class="a" style="left:179px;top:499px;width:1218px;height:2px;background:#bdbdbd"></div>
<div class="a" style="left:293px;top:430px;width:1px;height:69px;background:#d0d0d0"></div>
<div class="a" style="left:396px;top:430px;width:1px;height:69px;background:#d0d0d0"></div>
<div class="a" style="left:520px;top:430px;width:1px;height:69px;background:#d0d0d0"></div>
<div class="a" style="left:745px;top:430px;width:1px;height:69px;background:#d0d0d0"></div>
<div class="a" style="left:1093px;top:430px;width:1px;height:69px;background:#d0d0d0"></div>
<div class="a" style="left:1204px;top:430px;width:1px;height:69px;background:#d0d0d0"></div>
<div class="a" style="left:1307px;top:430px;width:1px;height:69px;background:#d0d0d0"></div>
<div class="a" style="left:1396px;top:406px;width:1px;height:95px;background:#bdbdbd"></div>
<div class="a" style="left:-64px;width:600px;text-align:center;top:412.57px;font-size:13.5px;line-height:1;font-weight:bold;color:#111">Date Sent</div>
<div class="a" style="left:44.5px;width:600px;text-align:center;top:412.57px;font-size:13.5px;line-height:1;font-weight:bold;color:#111">Time Sent</div>
<div class="a" style="left:158px;width:600px;text-align:center;top:412.57px;font-size:13.5px;line-height:1;font-weight:bold;color:#111">Initiated By</div>
<div class="a" style="left:332.5px;width:600px;text-align:center;top:412.57px;font-size:13.5px;line-height:1;font-weight:bold;color:#111">Sent To</div>
<div class="a" style="left:619px;width:600px;text-align:center;top:412.57px;font-size:13.5px;line-height:1;font-weight:bold;color:#111">Email Type</div>
<div class="a" style="left:848.5px;width:600px;text-align:center;top:412.57px;font-size:13.5px;line-height:1;font-weight:bold;color:#111">Date Read</div>
<div class="a" style="left:955.5px;width:600px;text-align:center;top:412.57px;font-size:13.5px;line-height:1;font-weight:bold;color:#111">Time Read</div>
<svg style="left:202px;top:439px" width="9" height="11" viewBox="0 0 9 11"><path d="M0 0H6L9 3V11H0Z" fill="#222"/><path d="M6 0V3H9" fill="#fff"/><path d="M2 5.5H7M2 7.5H7" stroke="#fff" stroke-width="0.8"/></svg>
<div class="a" style="left:215px;top:438.00px;font-size:13px;line-height:1;color:#111">11/2/2021</div>
<div class="a" style="left:44.5px;width:600px;text-align:center;top:438.00px;font-size:13px;line-height:1;color:#111">11:15am</div>
<div class="a" style="left:158px;width:600px;text-align:center;top:439.33px;font-size:12.6px;line-height:1;color:#111">InflatableOffice</div>
<div class="a" style="left:332.5px;width:600px;text-align:center;top:438.00px;font-size:13px;line-height:1;color:#111">Christine Bennett</div>
<div class="a" style="left:748px;top:438.00px;font-size:13px;line-height:1;color:#111">Customer - Recent Quote (customer created)</div>
<div class="a" style="left:848.5px;width:600px;text-align:center;top:438.00px;font-size:13px;line-height:1;color:#111">11/2/2021</div>
<div class="a" style="left:955.5px;width:600px;text-align:center;top:438.00px;font-size:13px;line-height:1;color:#111">12:21pm</div>
<svg style="left:198px;top:463px" width="9" height="11" viewBox="0 0 9 11"><path d="M0 0H6L9 3V11H0Z" fill="#222"/><path d="M6 0V3H9" fill="#fff"/><path d="M2 5.5H7M2 7.5H7" stroke="#fff" stroke-width="0.8"/></svg>
<div class="a" style="left:211px;top:462.00px;font-size:13px;line-height:1;color:#111">10/30/2021</div>
<div class="a" style="left:44.5px;width:600px;text-align:center;top:462.00px;font-size:13px;line-height:1;color:#111">11:03am</div>
<div class="a" style="left:158px;width:600px;text-align:center;top:463.33px;font-size:12.6px;line-height:1;color:#111">InflatableOffice</div>
<div class="a" style="left:332.5px;width:600px;text-align:center;top:462.00px;font-size:13px;line-height:1;color:#111">Jason H</div>
<div class="a" style="left:748px;top:462.00px;font-size:13px;line-height:1;color:#111">Alert: New Quote</div>
<div class="a" style="left:848.5px;width:600px;text-align:center;top:462.00px;font-size:13px;line-height:1;color:#111">--</div>
<div class="a" style="left:955.5px;width:600px;text-align:center;top:462.00px;font-size:13px;line-height:1;color:#111">--</div>
<svg style="left:198px;top:484px" width="9" height="11" viewBox="0 0 9 11"><path d="M0 0H6L9 3V11H0Z" fill="#222"/><path d="M6 0V3H9" fill="#fff"/><path d="M2 5.5H7M2 7.5H7" stroke="#fff" stroke-width="0.8"/></svg>
<div class="a" style="left:211px;top:483.00px;font-size:13px;line-height:1;color:#111">10/30/2021</div>
<div class="a" style="left:44.5px;width:600px;text-align:center;top:483.00px;font-size:13px;line-height:1;color:#111">11:03am</div>
<div class="a" style="left:158px;width:600px;text-align:center;top:484.33px;font-size:12.6px;line-height:1;color:#111">InflatableOffice</div>
<div class="a" style="left:332.5px;width:600px;text-align:center;top:483.00px;font-size:13px;line-height:1;color:#111">erin@ohiomobilegaming.com</div>
<div class="a" style="left:748px;top:483.00px;font-size:13px;line-height:1;color:#111">Alert: New Quote</div>
<div class="a" style="left:848.5px;width:600px;text-align:center;top:483.00px;font-size:13px;line-height:1;color:#111">--</div>
<div class="a" style="left:955.5px;width:600px;text-align:center;top:483.00px;font-size:13px;line-height:1;color:#111">--</div>
<div class="a" style="left:1324px;top:433px;width:56px;height:22px;background:#e9e9ed;border:1px solid #8f8f9d;border-radius:4px"></div>
<div class="a" style="left:1052px;width:600px;text-align:center;top:438.00px;font-size:13px;line-height:1;color:#000">Resend</div>
<div class="a" style="left:182px;top:522.50px;font-size:13px;line-height:1;color:#111">User Log</div>
<div class="a" style="left:179px;top:538px;width:1218px;height:3px;background:#c8c8c8"></div>
<div class="a" style="left:179px;top:541px;width:1218px;height:1px;background:#999"></div>
<div class="a" style="left:179px;top:542px;width:1218px;height:20px;background:linear-gradient(180deg,#fff 0,#fff 1px,#ececec 1px,#f0f0f0 7px,#fff 7px,#fff 8px,#f2f2f2 8px,#f4f4f4 13px,#fff 13px,#fff 15px,#aaa 15px,#aaa 16px,#cacaca 16px)"></div>
<div class="a" style="left:348px;top:541px;width:1px;height:21px;background:#bdbdbd"></div>
<div class="a" style="left:349px;top:541px;width:1px;height:21px;background:#fafafa"></div>
<div class="a" style="left:481px;top:541px;width:1px;height:21px;background:#bdbdbd"></div>
<div class="a" style="left:482px;top:541px;width:1px;height:21px;background:#fafafa"></div>
<div class="a" style="left:630px;top:541px;width:1px;height:21px;background:#bdbdbd"></div>
<div class="a" style="left:631px;top:541px;width:1px;height:21px;background:#fafafa"></div>
<div class="a" style="left:844px;top:541px;width:1px;height:21px;background:#bdbdbd"></div>
<div class="a" style="left:845px;top:541px;width:1px;height:21px;background:#fafafa"></div>
<div class="a" style="left:179px;top:598px;width:1218px;height:1px;background:#d4d4d4"></div>
<div class="a" style="left:179px;top:619px;width:1218px;height:1px;background:#d4d4d4"></div>
<div class="a" style="left:179px;top:640px;width:1218px;height:1px;background:#d4d4d4"></div>
<div class="a" style="left:348px;top:562px;width:1px;height:57px;background:#d0d0d0"></div>
<div class="a" style="left:481px;top:562px;width:1px;height:57px;background:#d0d0d0"></div>
<div class="a" style="left:630px;top:562px;width:1px;height:57px;background:#d0d0d0"></div>
<div class="a" style="left:844px;top:562px;width:1px;height:57px;background:#d0d0d0"></div>
<div class="a" style="left:-36.5px;width:600px;text-align:center;top:543.07px;font-size:13.5px;line-height:1;font-weight:bold;color:#111">Date</div>
<div class="a" style="left:114.5px;width:600px;text-align:center;top:543.07px;font-size:13.5px;line-height:1;font-weight:bold;color:#111">Time</div>
<div class="a" style="left:255.5px;width:600px;text-align:center;top:543.07px;font-size:13.5px;line-height:1;font-weight:bold;color:#111">User</div>
<div class="a" style="left:437px;width:600px;text-align:center;top:543.07px;font-size:13.5px;line-height:1;font-weight:bold;color:#111">IP</div>
<div class="a" style="left:820.5px;width:600px;text-align:center;top:543.07px;font-size:13.5px;line-height:1;font-weight:bold;color:#111">Description</div>
<div class="a" style="left:-36.5px;width:600px;text-align:center;top:566.00px;font-size:13px;line-height:1;color:#111">10/30/2021</div>
<div class="a" style="left:114.5px;width:600px;text-align:center;top:566.00px;font-size:13px;line-height:1;color:#111">11:03am</div>
<div class="a" style="left:255.5px;width:600px;text-align:center;top:566.00px;font-size:13px;line-height:1;color:#111">Customer</div>
<div class="a" style="left:437px;width:600px;text-align:center;top:566.00px;font-size:13px;line-height:1;color:#111">174.207.96.93</div>
<div class="a" style="left:-36.5px;width:600px;text-align:center;top:603.00px;font-size:13px;line-height:1;color:#111">10/30/2021</div>
<div class="a" style="left:114.5px;width:600px;text-align:center;top:603.00px;font-size:13px;line-height:1;color:#111">11:03am</div>
<div class="a" style="left:255.5px;width:600px;text-align:center;top:603.00px;font-size:13px;line-height:1;color:#111">Customer</div>
<div class="a" style="left:437px;width:600px;text-align:center;top:603.00px;font-size:13px;line-height:1;color:#111">174.207.96.93</div>
<div class="a" style="left:847px;top:603.33px;font-size:12.6px;line-height:1;color:#111">Lead ID# 8833703 Created</div>
<div class="a" style="left:847px;top:566.16px;font-size:12.8px;line-height:1;color:#111">Lattitude: 41.195109 -&gt; 41.1951085</div>
<div class="a" style="left:847px;top:582.16px;font-size:12.8px;line-height:1;color:#111">Longitude: -81.439563 -&gt; -81.4395632</div>
<div class="a" style="left:488.5px;width:600px;text-align:center;top:645.00px;font-size:13px;line-height:1;color:#111">ID: 8833703 | Created: 10/30/2021 11:03am | Modified: 10/30/2021 11:03am</div>
<div class="a" style="left:26px;top:669.69px;font-size:11px;line-height:1;color:#333344;letter-spacing:0.8px">Home | Features &amp; Prices | My Account | FAQ | Terms | Support Center | Help</div>
<div class="a" style="left:26px;top:682.69px;font-size:11px;line-height:1;color:#333344;letter-spacing:0.95px">&copy; InflatableOffice, LLC | support@inflatableoffice.com | 440-385-4080</div>
<div class="a" style="left:484px;top:664px;width:80px;height:15px;background:#fff;border:1px solid #777"></div>
<div class="a" style="left:486px;top:666px;width:37px;height:11px;background:#ff6600"></div>
<div class="a" style="left:204.5px;width:600px;text-align:center;top:667.03px;font-size:10px;line-height:1;color:#fff;letter-spacing:0.3px">uptime</div>
<div class="a" style="left:243px;width:600px;text-align:center;top:667.11px;font-size:10.5px;line-height:1;font-family:'Liberation Mono',monospace;color:#111;letter-spacing:-0.5px">100%</div></div>
<div id="vscroll"><div class="a" style="left:0;top:174px;width:21px;height:510px;background:#cdcdcd"></div>
<svg style="left:5px;top:6px" width="11" height="7" viewBox="0 0 11 7"><path d="M1 6L5.5 1.5L10 6" fill="none" stroke="#606060" stroke-width="1.8"/></svg>
<svg style="left:5px;top:691px" width="11" height="7" viewBox="0 0 11 7"><path d="M1 1L5.5 5.5L10 1" fill="none" stroke="#606060" stroke-width="1.8"/></svg></div>
<div id="hscroll"><div class="a" style="left:21px;top:1px;width:1425px;height:21px;background:#cdcdcd"></div>
<svg style="left:6px;top:6px" width="8" height="11" viewBox="0 0 8 11"><path d="M6.5 1L2 5.5L6.5 10" fill="none" stroke="#606060" stroke-width="1.8"/></svg>
<svg style="left:1477px;top:6px" width="8" height="11" viewBox="0 0 8 11"><path d="M1.5 1L6 5.5L1.5 10" fill="none" stroke="#606060" stroke-width="1.8"/></svg></div>
<div id="task">
  <svg style="left:34px;top:14px" width="21" height="21" viewBox="0 0 21 21"><path d="M0 3L8.5 1.8V9.8H0Z M9.8 1.6L21 0V9.8H9.8Z M0 11H8.5V19.2L0 18Z M9.8 11H21V21L9.8 19.4Z" fill="#fff"/></svg>
  <svg style="left:34px;top:64px" width="21" height="21" viewBox="0 0 21 21"><circle cx="13" cy="8" r="6.5" fill="none" stroke="#fff" stroke-width="1.4"/><path d="M8.3 12.7L1 20" stroke="#fff" stroke-width="1.5"/></svg>
  <svg style="left:34px;top:115px" width="21" height="21" viewBox="0 0 21 21"><circle cx="10.5" cy="10.5" r="8.5" fill="none" stroke="#fff" stroke-width="2.6"/></svg>
  <svg style="left:34px;top:164px" width="21" height="21" viewBox="0 0 21 21"><path d="M0.5 4H14M0.5 17H14M3 4V17M11.5 4V17" stroke="#fff" stroke-width="1.3" fill="none"/><path d="M19 0V21" stroke="#fff" stroke-width="1.3"/><rect x="17.5" y="7" width="3" height="4" fill="#fff"/></svg>
  <div class="a" style="left:0;top:204px;width:85px;height:58px;background:#a6652f"></div>
  <div class="a" style="left:85px;top:204px;width:3px;height:58px;background:#f7630c"></div>
  <svg style="left:30px;top:219px" width="28" height="28" viewBox="0 0 28 28"><circle cx="14" cy="14" r="13.5" fill="#db4437"/><path d="M14 14L2.3 20.75A13.5 13.5 0 0 0 14 27.5Z" fill="#0f9d58"/><path d="M14 14L14 27.5A13.5 13.5 0 0 0 25.7 20.75Z" fill="#0f9d58"/><path d="M14 14L25.7 20.75A13.5 13.5 0 0 0 25.7 7.25Z" fill="#ffcd40"/><path d="M14 7.25H25.7A13.5 13.5 0 0 1 19.8 26.2L14 14Z" fill="#ffcd40"/><path d="M14 14L2.3 7.25A13.5 13.5 0 0 0 8 26.2Z" fill="#0f9d58"/><circle cx="14" cy="14" r="6.2" fill="#fff"/><circle cx="14" cy="14" r="4.8" fill="#4285f4"/></svg>
  <svg style="left:30px;top:278px" width="28" height="26" viewBox="0 0 28 26"><path d="M1 2A1 1 0 0 1 2 1H10L13 4H26A1 1 0 0 1 27 5V24A1 1 0 0 1 26 25H2A1 1 0 0 1 1 24Z" fill="#f4c144"/><path d="M1 7H27V24A1 1 0 0 1 26 25H2A1 1 0 0 1 1 24Z" fill="#ffd65c"/><path d="M8 13H20V25H17V17H11V25H8Z" fill="#2b88d8"/></svg>
  <svg style="left:29px;top:336px" width="30" height="30" viewBox="0 0 30 30"><defs><linearGradient id="eg" x1="0" y1="0" x2="1" y2="0.3"><stop offset="0" stop-color="#2aa8ee"/><stop offset="0.55" stop-color="#33b8d8"/><stop offset="1" stop-color="#62d866"/></linearGradient></defs><path d="M1 15C1 6 8 1 15.5 1C23 1 29 6.5 29 13C29 17 26 19 22.5 19C19.5 19 18 17.5 18.5 16C19 14.5 18 12 15 12C10 12 6.5 16 7 21C7.5 26 12 29 16 29C8 29 1 23 1 15Z" fill="url(#eg)"/><path d="M1.5 12C3 19 8 27 16 29C20 29.5 24 28 26.5 25.5C23 26.5 19 26 16.5 24C13 21.5 12.5 16.5 15.5 13.5C12 10.5 5 10 1.5 12Z" fill="#0c62b8"/><path d="M15.5 13.5C13 15.5 12.5 20 14.5 22.5C17 26 22 26.5 26.5 25.5C28 23.5 29 21 29 19C27 20 25 20.5 22.5 20.5C18.5 20.5 16 18 15.5 13.5Z" fill="#1580d8" opacity=".6"/></svg>
  <div class="a" style="left:4px;top:381px;width:81px;height:58px;background:#59605f"></div>
  <div class="a" style="left:85px;top:381px;width:3px;height:58px;background:#76b9ed"></div>
  <svg style="left:29px;top:394px" width="30" height="31" viewBox="0 0 30 31"><defs><linearGradient id="fg" x1="0.8" y1="0" x2="0.2" y2="1"><stop offset="0" stop-color="#fff44f"/><stop offset="0.35" stop-color="#ff980e"/><stop offset="0.7" stop-color="#ff3647"/><stop offset="1" stop-color="#e31587"/></linearGradient><radialGradient id="fp" cx="0.4" cy="0.3" r="0.8"><stop offset="0" stop-color="#a06bff"/><stop offset="1" stop-color="#5b2ad0"/></radialGradient></defs><path d="M21 1C22 4 21.5 6 20.5 7C25 8.5 28.5 12.5 28.5 17.5C28.5 25 22.5 30 15 30C7.5 30 1.5 24.5 1.5 17C1.5 13 3 10 5 8C5 9.5 5.5 11 6.5 12C8 9.5 10.5 8 13 7.5C17 6.5 21 4.5 21 1Z" fill="url(#fg)"/><circle cx="16" cy="17" r="6.8" fill="url(#fp)"/><path d="M3 14C5 12 9 11.5 12 12.5C9.5 13.5 8 15.5 8.5 19C9 22.5 12 25 16 25C20.5 25 24 22 24.5 18C26.5 24 21.5 29 15 29C8 29 3 24 2.5 18Z" fill="#ff5a36" opacity=".85"/></svg>
  <svg style="left:32px;top:454px" width="25" height="30" viewBox="0 0 25 30"><defs><linearGradient id="og" x1="0" y1="0" x2="1" y2="0"><stop offset="0" stop-color="#d1282a"/><stop offset="1" stop-color="#f0661c"/></linearGradient></defs><path d="M1 6.5L15.5 0.5L24 3.5V26.5L15.5 29.5L1 24.5Z" fill="url(#og)"/><path d="M6.5 8.5L15.5 6V24L6.5 22Z" fill="#2a3336"/><path d="M1 24.5L15.5 26V29.5Z" fill="#a51c30"/><path d="M1 7L6.5 8.5V22L1 24.5Z" fill="#c9245a" opacity=".7"/></svg>
  <div class="a" style="left:85px;top:503px;width:3px;height:57px;background:#76b9ed"></div>
  <svg style="left:30px;top:514px" width="29" height="29" viewBox="0 0 29 29"><circle cx="14.5" cy="14.5" r="14" fill="#1e88d4"/><path d="M4 18C8 15 12 15 15 19C18 14 22 13 26 14C22 15 19 17 16 21C12 18 8 17 4 18Z" fill="#fff"/><path d="M9 11C11 10 13 10 14 12C16 10 18 9.5 20 10C18 11 16 12 15 14C13 12 11 11 9 11Z" fill="#fff"/></svg>
  <svg style="left:16px;top:658px" width="10" height="17" viewBox="0 0 10 17"><path d="M9 1L1.5 8.5L9 16" fill="none" stroke="#fff" stroke-width="1.3"/></svg>
  <svg style="left:15px;top:686px" width="15" height="20" viewBox="0 0 15 20"><rect x="0.6" y="5" width="9.5" height="9.5" rx="1.8" fill="none" stroke="#fff" stroke-width="1.1"/><path d="M10.1 8.2L14.2 6.2V13.3L10.1 11.3" fill="none" stroke="#fff" stroke-width="1.1"/><path d="M2 2.2Q7 -0.5 12 2.2M2 17.3Q7 20 12 17.3" fill="none" stroke="#fff" stroke-width="1"/></svg>
  <svg style="left:41px;top:687px" width="20" height="17" viewBox="0 0 20 17"><path d="M5.5 0.5L10 3.2L5.5 6L1 3.2Z M14.5 0.5L19 3.2L14.5 6L10 3.2Z M14.5 6L19 8.8L14.5 11.5L10 8.8Z M10 11.5L13.5 13.5L10 15.5Z" fill="#fff"/></svg>
  <div class="a" style="left:41px;top:695px;width:11px;height:11px;background:#e81123;border-radius:2px;color:#fff;font:bold 9.5px 'Liberation Sans';text-align:center;line-height:11px">1</div>
  <svg style="left:10px;top:718px" width="21" height="14" viewBox="0 0 21 14"><path d="M4 13.5A3.5 3.5 0 0 1 3.8 6.6A5.2 5.2 0 0 1 13.6 5A4 4 0 0 1 17.6 8.4A2.6 2.6 0 0 1 17.4 13.5Z" fill="#d8d8d8"/><path d="M6 13.5L12 8.5L17.5 13.5Z" fill="#f2f2f2"/><path d="M3.8 6.6A5.2 5.2 0 0 1 13.6 5L8 9Z" fill="#b8b8b8"/></svg>
  <svg style="left:40px;top:717px" width="22" height="18" viewBox="0 0 22 18"><path d="M1 6H4.5L9 1.5V16.5L4.5 12H1Z" fill="none" stroke="#fff" stroke-width="1.1"/><path d="M12 6.5A3.5 3.5 0 0 1 12 11.5M15 4.5A6 6 0 0 1 15 13.5" fill="none" stroke="#fff" stroke-width="1.1"/><path d="M18.2 1A11 11 0 0 1 18.2 17" fill="none" stroke="#bbb" stroke-width="0.9"/></svg>
  <svg style="left:11px;top:747px" width="21" height="18" viewBox="0 0 21 18"><rect x="3" y="1" width="17" height="11" fill="none" stroke="#fff" stroke-width="1"/><path d="M11.5 12V16M7 16.5H16" stroke="#fff" stroke-width="1"/><rect x="0.5" y="0.5" width="4" height="4.5" fill="#28323a" stroke="#fff" stroke-width="0.9"/><path d="M2.5 5V12H3" stroke="#fff" stroke-width="0.9" fill="none"/></svg>
  <div class="a" style="left:0;top:789px;width:88px;text-align:center;font-size:14.5px;color:#fff">12:22 PM</div>
  <div class="a" style="left:0;top:811px;width:88px;text-align:center;font-size:14.5px;color:#fff">11/2/2021</div>
  <svg style="left:34px;top:853px" width="34" height="32" viewBox="0 0 34 32"><path d="M0 1H20V19H7L4 22V19H0Z" fill="#fff"/><path d="M4 6H16M4 10H16M4 14H13" stroke="#333" stroke-width="1.2"/><circle cx="20" cy="20" r="10" fill="#2d3234" stroke="#9a9a9a" stroke-width="1"/><text x="15.2" y="25.5" font-family="Liberation Sans" font-size="15" fill="#fff">3</text></svg>
  <div class="a" style="left:0;top:894px;width:88px;height:1px;background:#555"></div>
</div>
</body></html>
